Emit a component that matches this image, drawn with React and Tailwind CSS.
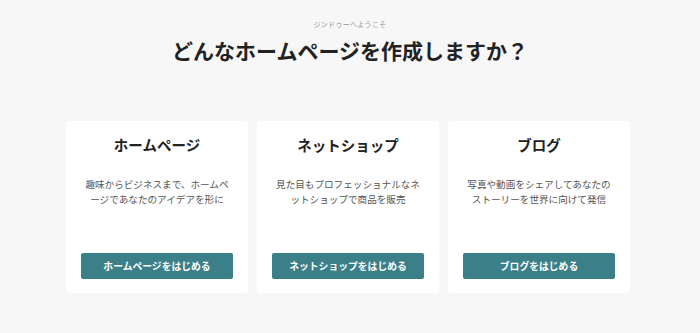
import React from "react";

const plans = [
  {
    title: "ホームページ",
    desc: "趣味からビジネスまで、ホームページであなたのアイデアを形に",
    cta: "ホームページをはじめる",
  },
  {
    title: "ネットショップ",
    desc: "見た目もプロフェッショナルなネットショップで商品を販売",
    cta: "ネットショップをはじめる",
  },
  {
    title: "ブログ",
    desc: "写真や動画をシェアしてあなたのストーリーを世界に向けて発信",
    cta: "ブログをはじめる",
  },
];

const font = {
  fontFamily: '"Noto Sans CJK JP", "Noto Sans", sans-serif',
};

const PlanCard = ({ title, desc, cta }) => (
  <div className="w-[182px] h-[172px] bg-white rounded-[3px] flex flex-col items-center px-[15px] pt-[14px] pb-[14px]">
    <h2 className="text-[14.5px] leading-[20px] font-bold text-[#222]">{title}</h2>
    <p className="mt-[22px] text-[9.6px] leading-[14.5px] text-[#555] text-center">{desc}</p>
    <button className="mt-auto w-full h-[26px] rounded-[2px] bg-[#3b8088] text-white text-[9.8px] font-bold">
      {cta}
    </button>
  </div>
);

export default function App() {
  return (
    <div className="w-full min-h-[333px] bg-[#f7f7f7] flex flex-col items-center" style={font}>
      <p className="mt-[19px] text-[7px] leading-[10px] text-[#999] tracking-[0.3px]">ジンドゥーへようこそ</p>
      <h1 className="mt-[5px] text-[21px] leading-[32px] font-bold text-[#222]">
        どんなホームページを作成しますか？
      </h1>
      <div className="mt-[55px] flex gap-[9px] pr-[4px]">
        {plans.map((p) => (
          <PlanCard key={p.title} {...p} />
        ))}
      </div>
    </div>
  );
}
